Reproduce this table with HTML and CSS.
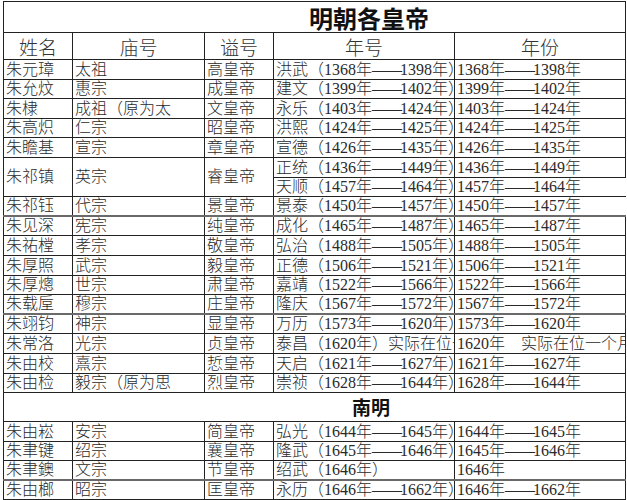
FILE: index.html
```html
<!DOCTYPE html>
<html lang="zh-CN">
<head>
<meta charset="utf-8">
<title>明朝各皇帝</title>
<link rel="stylesheet" href="styles.css">
</head>
<body>
<table class="sheet">
  <colgroup>
    <col class="c-name"><col class="c-temple"><col class="c-post"><col class="c-era"><col class="c-year">
  </colgroup>
  <tr class="title"><td colspan="5">明朝各皇帝</td></tr>
  <tr class="head"><th>姓名</th><th>庙号</th><th>谥号</th><th>年号</th><th>年份</th></tr>
  <tr class="row"><td>朱元璋</td><td>太祖</td><td>高皇帝</td><td>洪武（1368年<span class="dash">——</span>1398年）</td><td>1368年<span class="dash">——</span>1398年</td></tr>
  <tr class="row"><td>朱允炆</td><td>惠宗</td><td>成皇帝</td><td>建文（1399年<span class="dash">——</span>1402年）</td><td>1399年<span class="dash">——</span>1402年</td></tr>
  <tr class="row"><td>朱棣</td><td>成祖（原为太</td><td>文皇帝</td><td>永乐（1403年<span class="dash">——</span>1424年）</td><td>1403年<span class="dash">——</span>1424年</td></tr>
  <tr class="row"><td>朱高炽</td><td>仁宗</td><td>昭皇帝</td><td>洪熙（1424年<span class="dash">——</span>1425年）</td><td>1424年<span class="dash">——</span>1425年</td></tr>
  <tr class="row"><td>朱瞻基</td><td>宣宗</td><td>章皇帝</td><td>宣德（1426年<span class="dash">——</span>1435年）</td><td>1426年<span class="dash">——</span>1435年</td></tr>
  <tr class="row"><td rowspan="2" class="mid">朱祁镇</td><td rowspan="2" class="mid">英宗</td><td rowspan="2" class="mid">睿皇帝</td><td>正统（1436年<span class="dash">——</span>1449年）</td><td>1436年<span class="dash">——</span>1449年</td></tr>
  <tr class="row"><td class="open">天顺（1457年<span class="dash">——</span>1464年）</td><td class="open">1457年<span class="dash">——</span>1464年</td></tr>
  <tr class="row"><td>朱祁钰</td><td>代宗</td><td>景皇帝</td><td class="open">景泰（1450年<span class="dash">——</span>1457年）</td><td class="open">1450年<span class="dash">——</span>1457年</td></tr>
  <tr class="row thick"><td>朱见深</td><td>宪宗</td><td>纯皇帝</td><td>成化（1465年<span class="dash">——</span>1487年）</td><td>1465年<span class="dash">——</span>1487年</td></tr>
  <tr class="row"><td>朱祐樘</td><td>孝宗</td><td>敬皇帝</td><td>弘治（1488年<span class="dash">——</span>1505年）</td><td>1488年<span class="dash">——</span>1505年</td></tr>
  <tr class="row"><td>朱厚照</td><td>武宗</td><td>毅皇帝</td><td>正德（1506年<span class="dash">——</span>1521年）</td><td>1506年<span class="dash">——</span>1521年</td></tr>
  <tr class="row"><td>朱厚熜</td><td>世宗</td><td>肃皇帝</td><td>嘉靖（1522年<span class="dash">——</span>1566年）</td><td>1522年<span class="dash">——</span>1566年</td></tr>
  <tr class="row"><td>朱载垕</td><td>穆宗</td><td>庄皇帝</td><td>隆庆（1567年<span class="dash">——</span>1572年）</td><td>1567年<span class="dash">——</span>1572年</td></tr>
  <tr class="row thick"><td>朱翊钧</td><td>神宗</td><td>显皇帝</td><td>万历（1573年<span class="dash">——</span>1620年）</td><td>1573年<span class="dash">——</span>1620年</td></tr>
  <tr class="row"><td>朱常洛</td><td>光宗</td><td>贞皇帝</td><td>泰昌（1620年）实际在位一个月</td><td>1620年　实际在位一个月</td></tr>
  <tr class="row"><td>朱由校</td><td>熹宗</td><td>悊皇帝</td><td>天启（1621年<span class="dash">——</span>1627年）</td><td>1621年<span class="dash">——</span>1627年</td></tr>
  <tr class="row"><td>朱由检</td><td>毅宗（原为思</td><td>烈皇帝</td><td>崇祯（1628年<span class="dash">——</span>1644年）</td><td>1628年<span class="dash">——</span>1644年</td></tr>
  <tr class="section"><td colspan="5">南明</td></tr>
  <tr class="row"><td>朱由崧</td><td>安宗</td><td>简皇帝</td><td>弘光（1644年<span class="dash">——</span>1645年）</td><td>1644年<span class="dash">——</span>1645年</td></tr>
  <tr class="row"><td>朱聿键</td><td>绍宗</td><td>襄皇帝</td><td>隆武（1645年<span class="dash">——</span>1646年）</td><td>1645年<span class="dash">——</span>1646年</td></tr>
  <tr class="row"><td>朱聿鐭</td><td>文宗</td><td>节皇帝</td><td>绍武（1646年）</td><td>1646年</td></tr>
  <tr class="row thick"><td>朱由榔</td><td>昭宗</td><td>匡皇帝</td><td>永历（1646年<span class="dash">——</span>1662年）</td><td>1646年<span class="dash">——</span>1662年</td></tr>
</table>
</body>
</html>
```

FILE: styles.css
```css
html, body {
  margin: 0;
  padding: 0;
  background: #ffffff;
}

body {
  font-family: "Liberation Serif", "Noto Sans CJK SC", serif;
  color: #2a2a2a;
  overflow: hidden;
}

.sheet {
  border-collapse: collapse;
  table-layout: fixed;
  width: 622px;
  margin: 1px 0 0 3px;
}

.c-name { width: 69px; }
.c-temple { width: 132px; }
.c-post { width: 69px; }
.c-era { width: 181px; }
.c-year { width: 171px; }

.sheet td,
.sheet th {
  border: 1px solid #222222;
  padding: 0 0 1px 2px;
  white-space: nowrap;
  overflow: hidden;
  font-size: 16px;
  line-height: 17px;
  vertical-align: bottom;
  text-align: left;
  font-weight: 300;
}

.dash {
  letter-spacing: -2px;
}

.row {
  height: 19.6px;
}

.row.thick td {
  border-top: 2px solid #6a6a6a;
}

.sheet td.mid {
  vertical-align: middle;
}

.sheet td.open {
  border-right: none;
  border-bottom: none;
}

.title {
  height: 31px;
}

.sheet .title td {
  font-family: "Noto Sans CJK SC", sans-serif;
  font-weight: bold;
  font-size: 24px;
  line-height: 29px;
  padding: 0 0 0 305px;
  overflow: visible;
  color: #111111;
}

.head {
  height: 27px;
}

.sheet .head th {
  font-family: "Noto Sans CJK SC", sans-serif;
  font-size: 19px;
  line-height: 25px;
  text-align: center;
  vertical-align: middle;
  padding: 0;
  overflow: visible;
  color: #333333;
}

.section {
  height: 29px;
}

.sheet .section td {
  font-family: "Noto Sans CJK SC", sans-serif;
  font-weight: bold;
  font-size: 19px;
  line-height: 26px;
  vertical-align: middle;
  padding-left: 348px;
  overflow: visible;
  color: #111111;
}
```
